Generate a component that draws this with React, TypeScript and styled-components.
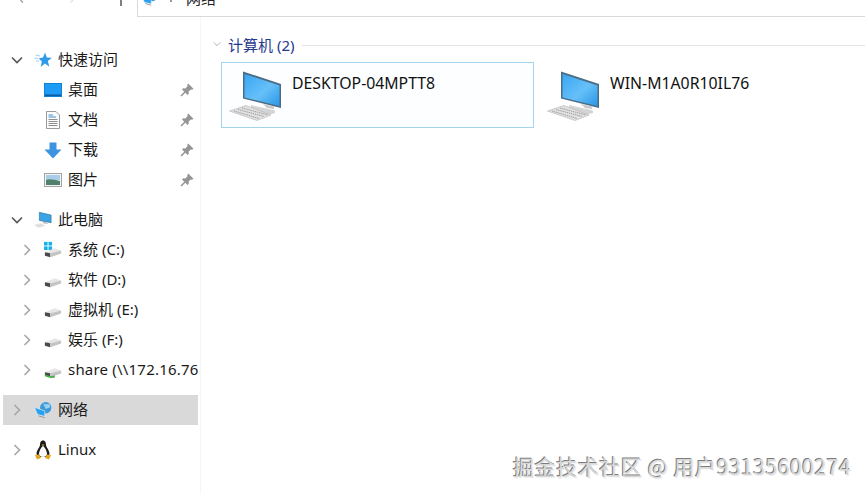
import React from 'react';
import styled, { createGlobalStyle } from 'styled-components';

const Global = createGlobalStyle`
  html, body {
    margin: 0;
    height: 100%;
    overflow: hidden;
    background: #fff;
  }
  * {
    box-sizing: border-box;
  }
`;

const Window = styled.div`
  position: relative;
  width: 865px;
  height: 494px;
  overflow: hidden;
  background: #fff;
  color: #1a1a1a;
  font-family: 'Noto Sans', 'Noto Sans CJK SC', sans-serif;
  font-size: 15px;
`;

/* toolbar is cut off by the top of the picture, only its lower edge shows */
const TopBar = styled.div`
  display: flex;
  align-items: flex-start;
  height: 17px;
  padding-left: 20px;
`;
const NavStub = styled.svg<{ $gap: number }>`
  flex: none;
  margin-right: ${(p) => p.$gap}px;
`;
const Separator = styled.div`
  width: 2px;
  height: 6px;
  flex: none;
  background: #808080;
`;
const Address = styled.div`
  display: flex;
  align-items: flex-end;
  height: 17px;
  margin-left: 15px;
  flex: 1;
  overflow: hidden;
  padding-left: 3px;
  border-left: 1px solid #d9d9d9;
  border-bottom: 1px solid #d9d9d9;
`;
const AddressIcon = styled.span`
  display: flex;
  flex: none;
  width: 17px;
  margin-bottom: 9px;
`;
const AddressDot = styled.span`
  width: 2px;
  height: 2px;
  flex: none;
  margin: 0 14px 14px 12px;
  background: #9a9a9a;
`;
const AddressText = styled.span`
  font-size: 15px;
  line-height: 20px;
  margin-bottom: 8px;
  color: #222;
`;

const Body = styled.div`
  display: flex;
  height: 477px;
`;

const Sidebar = styled.nav`
  width: 201px;
  flex: none;
  padding-top: 28px;
  border-right: 1px solid #f6f6f6;
`;
const Group = styled.div`
  margin-bottom: 10px;
`;
const Row = styled.div<{ $level: number; $selected?: boolean }>`
  display: flex;
  align-items: center;
  width: 195px;
  height: 30px;
  margin-left: 3px;
  padding-left: ${(p) => (p.$level === 1 ? 5 : 15)}px;
  overflow: hidden;
  white-space: nowrap;
  background: ${(p) => (p.$selected ? '#d9d9d9' : 'transparent')};
`;
const ChevronSlot = styled.span`
  display: flex;
  width: 16px;
  flex: none;
  justify-content: center;
  margin-left: 1px;
  margin-right: 9px;
`;
const IconSlot = styled.span`
  display: flex;
  width: 18px;
  height: 18px;
  flex: none;
  align-items: center;
  justify-content: center;
  margin-right: 6px;
`;
const Label = styled.span<{ $spaced?: boolean }>`
  flex: 1;
  min-width: 0;
  line-height: 20px;
  margin-top: -2px;
  letter-spacing: ${(p) => (p.$spaced ? '0.2px' : '0')};
`;
const PinSlot = styled.span`
  display: flex;
  width: 14px;
  flex: none;
  margin-right: 4px;
`;

const Content = styled.main`
  flex: 1;
  min-width: 0;
  padding: 18px 0 0 20px;
`;
const GroupHead = styled.div`
  display: flex;
  align-items: center;
  height: 18px;
  color: #1f3a8f;
  font-size: 15px;
`;
const HeadChevron = styled.span`
  display: flex;
  width: 8px;
  margin-right: 7px;
  margin-left: -8px;
  flex: none;
`;
const HeadLine = styled.span`
  flex: 1;
  height: 1px;
  margin-left: 8px;
  margin-top: 2px;
  background: #e5e5e5;
`;
const Cards = styled.div`
  display: flex;
  gap: 5px;
  margin-top: 9px;
`;
const Card = styled.div<{ $hovered?: boolean }>`
  display: flex;
  gap: 8px;
  width: 313px;
  height: 66px;
  flex: none;
  padding: 8px 0 0 7px;
  border: 1px solid ${(p) => (p.$hovered ? '#a5d2ec' : 'transparent')};
  background: ${(p) => (p.$hovered ? '#fcfeff' : 'transparent')};
`;
const CardName = styled.span`
  font-size: 15.8px;
  line-height: 20px;
  margin-top: 2px;
  color: #111;
`;

const Watermark = styled.div`
  position: absolute;
  left: 513px;
  top: 452px;
  white-space: nowrap;
  font-family: 'Noto Sans CJK SC', 'Noto Sans', sans-serif;
  font-size: 21px;
  line-height: 28px;
  letter-spacing: 0.58px;
  color: #d8d8d8;
  text-shadow: -1px -1px 0 #7d7d7d, 1px 1px 0 #f0f0f0;
`;

const Chevron = ({ down }: { down?: boolean }) => (
  <svg width="14" height="14" viewBox="0 0 14 14" fill="none">
    <path
      d={down ? 'M2 4.5 L7 9.5 L12 4.5' : 'M4.5 2 L9.5 7 L4.5 12'}
      stroke={down ? '#555' : '#a6a6a6'}
      strokeWidth="1.6"
    />
  </svg>
);

const Pin = () => (
  <svg width="14" height="14" viewBox="0 0 14 14">
    <path d="M8.2 0.5 L13.5 5.8 L12 6.8 L10.9 6.4 L8.6 8.6 L8.8 10.8 L7.6 12 L2 6.4 L3.2 5.2 L5.4 5.4 L7.6 3.1 L7.2 2 Z" fill="#959595" />
    <path d="M5 9 L1 13" stroke="#959595" strokeWidth="1.6" />
  </svg>
);

const Star = () => (
  <svg width="18" height="16" viewBox="0 0 18 16">
    <path d="M11 0.5 L12.8 5.5 L17.8 5.8 L13.9 9 L15.3 14.8 L11 11.6 L6.6 15 L7.9 9.4 L4.6 6.6 L9 5.4 Z" fill="#2f9be8" />
    <path d="M1.5 3 L6 4 M0.5 6 L4 6.5 M2 9 L5 9" stroke="#9fd0f2" strokeWidth="1" />
  </svg>
);

const DesktopIcon = () => (
  <svg width="18" height="14" viewBox="0 0 18 14">
    <rect x="0.5" y="0.5" width="17" height="13" fill="#1d9bf5" stroke="#1183d6" />
    <rect x="1" y="11.5" width="16" height="1.5" fill="#0c5da3" />
  </svg>
);

const DocIcon = () => (
  <svg width="16" height="18" viewBox="0 0 16 18">
    <path d="M1.5 0.5 H11 L14.5 4 V17.5 H1.5 Z" fill="#fbfbfb" stroke="#9a9a9a" />
    <path d="M3.5 4 H8 M3.5 6 H11" stroke="#3e8fd0" strokeWidth="1" />
    <path d="M3.5 8.5 H12.5 M3.5 10.5 H12.5 M3.5 12.5 H12.5 M3.5 14.5 H12.5" stroke="#8f8f8f" strokeWidth="1" />
  </svg>
);

const DownloadIcon = () => (
  <svg width="18" height="17" viewBox="0 0 18 17">
    <path d="M5.5 0.5 H12.5 V7.5 H17.5 L9 16.5 L0.5 7.5 H5.5 Z" fill="#3c93e0" />
  </svg>
);

const PictureIcon = () => (
  <svg width="18" height="14" viewBox="0 0 18 14">
    <rect x="0.5" y="0.5" width="17" height="13" fill="#f4f4f4" stroke="#a3a3a3" />
    <rect x="2" y="2" width="14" height="5" fill="#a9cde8" />
    <path d="M2 7 C6 5.5 10 7 16 8 V12 H2 Z" fill="#52806f" />
  </svg>
);

const ThisPc = () => (
  <svg width="20" height="18" viewBox="0 0 20 18">
    <path d="M6 0.5 L19 3.5 V12 L6 9.5 Z" fill="#3ba3e6" stroke="#2a6f9f" strokeWidth="0.7" />
    <path d="M10 11 L15 12 V13.5 L10 12.5 Z" fill="#b8b8b8" />
    <path d="M0 14.5 L7 12.5 L13 15.5 L5 17.5 Z" fill="#dedede" />
  </svg>
);

const Drive = ({ windows, network }: { windows?: boolean; network?: boolean }) => (
  <svg width="20" height="18" viewBox="0 0 20 18">
    {windows && (
      <g fill="#17b0ea">
        <rect x="0" y="0" width="4" height="4" />
        <rect x="5" y="0" width="4" height="4" />
        <rect x="0" y="5" width="4" height="4" />
        <rect x="5" y="5" width="4" height="4" />
      </g>
    )}
    <path d="M1 11.5 L12 7 L19 9.5 L7 12.5 Z" fill="#e6e6e6" />
    <path d="M1 11.5 L7 12.5 V17 L1 15.5 Z" fill="#4a4a4a" />
    <path d="M7 12.5 L19 9.5 V13 L7 17 Z" fill="#c4c4c4" />
    {network && <path d="M1 14 L7 16 L12 15 V17.5 L7 18 L1 16 Z" fill="#46b04a" />}
  </svg>
);

const NetworkIcon = () => (
  <svg width="20" height="18" viewBox="0 0 20 18">
    <circle cx="13" cy="6.5" r="6.3" fill="#3d9ad9" />
    <path d="M10 1.5 C12 3.5 15 2.5 17 2 L18 6 L13 8 Z" fill="#9ad2f3" />
    <path d="M0.5 6 L12 10 V16 L4 14 Z" fill="#2aa0ee" stroke="#dff1fb" strokeWidth="0.7" />
    <path d="M5 15.5 L12 17.5" stroke="#8f8f8f" strokeWidth="1" />
  </svg>
);

const Tux = () => (
  <svg width="18" height="20" viewBox="0 0 18 20">
    <path d="M9 0.5 C6.5 0.5 6 3 6 5 C6 7 2.5 10 2.5 14 L4 17 H14 L15.5 14 C15.5 10 12 7 12 5 C12 3 11.5 0.5 9 0.5 Z" fill="#1c1c1c" />
    <path d="M9 6 C7.3 7 5 11 5 14 C5 16 7 17 9 17 C11 17 13 16 13 14 C13 11 10.7 7 9 6 Z" fill="#fbfbfb" />
    <path d="M7.5 4.5 L10.5 4.5 L9 6.2 Z" fill="#e9a820" />
    <path d="M1 15 L5 14.5 L7 18 L3 19.5 Z M17 15 L13 14.5 L11 18 L15 19.5 Z" fill="#e3a51c" />
  </svg>
);

const Computer = () => (
  <svg width="55" height="50" viewBox="0 0 55 50">
    <defs>
      <linearGradient id="screen" x1="0" y1="0" x2="1" y2="1">
        <stop offset="0" stopColor="#38a6f2" />
        <stop offset="0.55" stopColor="#66c0f8" />
        <stop offset="1" stopColor="#2a97e6" />
      </linearGradient>
    </defs>
    <path d="M14 0.5 L52 13 V37 L14 27.5 Z" fill="#4a6d85" />
    <path d="M15.5 3 L50.5 14.5 V35 L15.5 26.5 Z" fill="url(#screen)" />
    <path d="M34 33 L45 35.5 V38 L38 37 Z" fill="#c9c9c9" />
    <path d="M22 34 L46 39.5 V42 L38 44 L22 37 Z" fill="#d4d4d4" />
    <path d="M0.5 40 L17 34.5 L42 44 L28 49.5 Z" fill="#e1e1e1" stroke="#b4b4b4" strokeWidth="0.6" />
    <path d="M5 40 L30 47.5 M9 38.5 L35 45.5 M13 37 L39 44" stroke="#9c9c9c" strokeWidth="1" strokeDasharray="1.4 0.8" />
  </svg>
);

type Item = { name: string; icon: React.ReactNode; pinned?: boolean; spaced?: boolean };

const quickAccess: Item[] = [
  { name: '桌面', icon: <DesktopIcon />, pinned: true },
  { name: '文档', icon: <DocIcon />, pinned: true },
  { name: '下载', icon: <DownloadIcon />, pinned: true },
  { name: '图片', icon: <PictureIcon />, pinned: true },
];

const drives: Item[] = [
  { name: '系统 (C:)', icon: <Drive windows /> },
  { name: '软件 (D:)', icon: <Drive /> },
  { name: '虚拟机 (E:)', icon: <Drive /> },
  { name: '娱乐 (F:)', icon: <Drive /> },
  { name: 'share (\\\\172.16.76', icon: <Drive network />, spaced: true },
];

const SideRow = ({
  level,
  icon,
  name,
  chevron,
  pinned,
  selected,
  spaced,
}: {
  level: number;
  icon: React.ReactNode;
  name: string;
  chevron?: 'down' | 'right';
  pinned?: boolean;
  selected?: boolean;
  spaced?: boolean;
}) => (
  <Row $level={level} $selected={selected}>
    <ChevronSlot>{chevron && <Chevron down={chevron === 'down'} />}</ChevronSlot>
    <IconSlot>{icon}</IconSlot>
    <Label $spaced={spaced}>{name}</Label>
    {pinned && (
      <PinSlot>
        <Pin />
      </PinSlot>
    )}
  </Row>
);

const App = () => {
  return (
    <Window>
      <Global />
      <TopBar>
        <NavStub $gap={42} width="6" height="3" viewBox="0 0 6 3" fill="none">
          <path d="M0.5 0 L3 2.5" stroke="#a0a0a0" strokeWidth="1.4" />
        </NavStub>
        <NavStub $gap={46} width="6" height="3" viewBox="0 0 6 3" fill="none">
          <path d="M5 0 L2.5 2.5" stroke="#e2e2e2" strokeWidth="1.4" />
        </NavStub>
        <Separator />
        <Address>
          <AddressIcon>
            <NetworkIcon />
          </AddressIcon>
          <AddressDot />
          <AddressText>网络</AddressText>
        </Address>
      </TopBar>
      <Body>
        <Sidebar>
          <Group>
            <SideRow level={1} chevron="down" icon={<Star />} name="快速访问" />
            {quickAccess.map((item) => (
              <SideRow key={item.name} level={2} icon={item.icon} name={item.name} pinned={item.pinned} />
            ))}
          </Group>
          <Group>
            <SideRow level={1} chevron="down" icon={<ThisPc />} name="此电脑" />
            {drives.map((item) => (
              <SideRow key={item.name} level={2} chevron="right" icon={item.icon} name={item.name} spaced={item.spaced} />
            ))}
          </Group>
          <Group>
            <SideRow level={1} chevron="right" icon={<NetworkIcon />} name="网络" selected />
          </Group>
          <Group>
            <SideRow level={1} chevron="right" icon={<Tux />} name="Linux" />
          </Group>
        </Sidebar>
        <Content>
          <GroupHead>
            <HeadChevron>
              <svg width="12" height="12" viewBox="0 0 12 12" fill="none">
                <path d="M1 3.5 L6 8.5 L11 3.5" stroke="#8c8c8c" strokeWidth="1" />
              </svg>
            </HeadChevron>
            计算机 (2)
            <HeadLine />
          </GroupHead>
          <Cards>
            <Card $hovered>
              <Computer />
              <CardName>DESKTOP-04MPTT8</CardName>
            </Card>
            <Card>
              <Computer />
              <CardName>WIN-M1A0R10IL76</CardName>
            </Card>
          </Cards>
        </Content>
      </Body>
      <Watermark>掘金技术社区 @ 用户93135600274</Watermark>
    </Window>
  );
};

export default App;
